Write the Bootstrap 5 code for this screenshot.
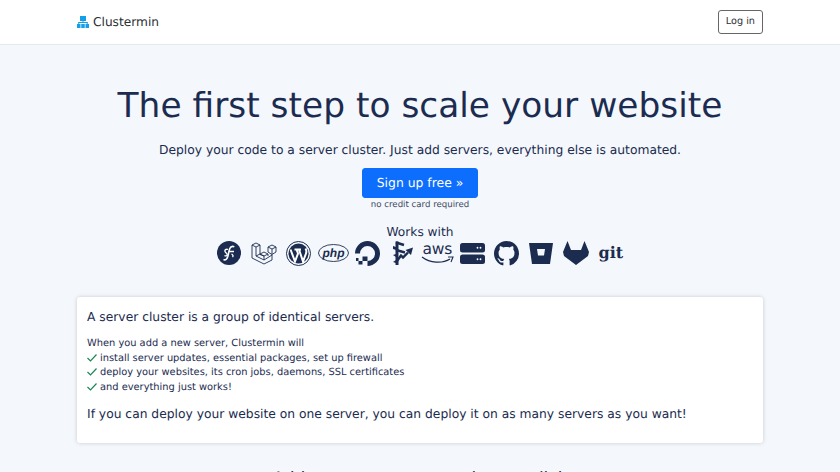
<!DOCTYPE html>
<html lang="en">
<head>
  <meta charset="UTF-8">
  <title>Clustermin</title>
  <meta name="viewport" content="width=device-width, initial-scale=1.0">
  <link href="https://cdn.jsdelivr.net/npm/bootstrap@5.3.0/dist/css/bootstrap.min.css" rel="stylesheet">
  <script src="https://cdn.jsdelivr.net/npm/bootstrap@5.3.0/dist/js/bootstrap.bundle.min.js"></script>
  <style>
    html, body { height: 472px; overflow: hidden; }
    body {
      background: #f4f8fc;
      font-family: "DejaVu Sans", sans-serif;
      color: #1c2c50;
      text-rendering: geometricPrecision;
    }
    .page-wrap { width: 686px; margin: 0 auto; }
    .top-bar { background: #fff; height: 45px; border-bottom: 1px solid #e4e7eb; }
    .brand-name { font-size: 12.2px; color: #2b2f36; }
    .login-btn {
      font-size: 9.7px; line-height: 16px; padding: 3px 7px; height: 24px;
      color: #2b2f36; border: 1px solid #666; border-radius: 3px; background: #fff;
    }
    .hero-title { font-size: 34.4px; font-weight: 400; line-height: 42px; margin: 0; padding-top: 40px; color: #1c2c50; }
    .hero-sub { font-size: 12.3px; line-height: 20px; margin: 13px 0 0; }
    .signup-btn { font-size: 12.4px; line-height: 20px; padding: 4px 14px; margin-top: 8px; border-radius: 3px; background: #0d6efd; border-color: #0d6efd; }
    .no-card { font-size: 8.6px; line-height: 14px; color: #3c4763; }
    .works-label { font-size: 12.2px; line-height: 14px; margin-top: 13px; }
    .logo-row { height: 28px; }
    .logo-slot { width: 34.7px; display: flex; justify-content: center; align-items: center; }
    .logo-slot svg { display: block; fill: #1c2c50; flex: none; }
    .aws-word { font-size: 15.5px; line-height: 14px; letter-spacing: -.2px; }
    .php-word { font: italic 700 12px "Liberation Sans", sans-serif; fill: #1c2c50; }
    .git-word { font-family: "DejaVu Serif", serif; font-weight: 700; font-size: 16px; line-height: 24px; }
    .info-box {
      background: #fff; margin-top: 30px; height: 146px; padding: 10px;
      border-radius: 3px; box-shadow: 0 0 4px rgba(0,0,0,.18);
    }
    .info-lead { font-size: 12.3px; line-height: 20px; margin: 0 0 10px; }
    .info-list { font-size: 9.86px; line-height: 14.7px; }
    .info-list svg { margin-right: 3px; vertical-align: -1px; }
    .info-end { font-size: 12.3px; line-height: 20px; margin: 8px 0 0; }
    .cut-line { font-size: 17px; line-height: 24px; margin-top: 24px; white-space: nowrap; }
  </style>
</head>
<body>

<div class="top-bar">
  <div class="page-wrap d-flex align-items-center justify-content-between h-100">
    <div class="d-flex align-items-center gap-1">
      <svg width="12" height="12" viewBox="0 0 12 12" fill="#14a0e8"><rect x="3" y="0" width="6" height="5"/><rect x="5.500" y="5" width="1" height="2"/><rect x="1.500" y="6" width="9" height="1"/><rect x="1.300" y="6" width="1" height="2"/><rect x="9.700" y="6" width="1" height="2"/><rect x="0" y="8" width="3.500" height="4"/><rect x="4.250" y="8" width="3.500" height="4"/><rect x="8.500" y="8" width="3.500" height="4"/></svg>
      <span class="brand-name">Clustermin</span>
    </div>
    <a href="#" class="btn login-btn">Log in</a>
  </div>
</div>

<div class="page-wrap text-center">
  <h1 class="hero-title">The first step to scale your website</h1>
  <p class="hero-sub">Deploy your code to a server cluster. Just add servers, everything else is automated.</p>
  <div class="d-flex justify-content-center">
    <a href="#" class="btn btn-primary signup-btn">Sign up free »</a>
  </div>
  <div class="no-card">no credit card required</div>
  <div class="works-label">Works with</div>
  <div class="logo-row d-flex justify-content-center align-items-center">
    <div class="logo-slot"><svg width="24" height="24" viewBox="0 0 24 24"><circle cx="12" cy="12" r="12"/><path d="M6.500 18.500c2 1 3.500-.5 4.300-3 .8-3 1-5.500 2-8 .8-2 2.500-2.500 4.500-1.800M11.500 10.500h5.500" fill="none" stroke="#fff" stroke-width="1.600"/><path d="M11 8.500c-2-.8-3.500.5-3 2 .5 1.500 2.500 2 2.200 3.500-.2 1-1.700 1.200-2.700.5M14.500 13c1.500.8 2 2 1 3.200" fill="none" stroke="#fff" stroke-width="1.300"/></svg></div>
    <div class="logo-slot"><svg width="26" height="24" viewBox="0 0 26 24"><path d="M1 4l4-2 4 2-4 2zM1 4v13l12 6 8-4v-5M5 6v9l8 4 8-5M9 4v9l-4 2M9 13l4-2 4 2-4 2zM9 13v.5l4 1.500v4M17 13v2M17 6l4-2 4 2-4 2zM17 6v5l4 2.500M21 8v5.500M25 6v5l-4 2.500" fill="none" stroke="#1c2c50" stroke-width=".9" stroke-linejoin="round"/></svg></div>
    <div class="logo-slot"><svg width="25" height="25" viewBox="0 0 25 25"><circle cx="12.500" cy="12.500" r="12" fill="none" stroke="#1c2c50" stroke-width="1"/><circle cx="12.500" cy="12.500" r="10"/><path d="M4.500 8.500l4.500 12 3-8-1.500-4M8.500 8.500h6.500M13 8.500l4 12 3-8c.8-2 .3-3.500-.5-5" fill="none" stroke="#fff" stroke-width="2"/></svg></div>
    <div class="logo-slot"><svg width="31" height="18" viewBox="0 0 31 18"><ellipse cx="15.500" cy="9" rx="15" ry="8.500" fill="none" stroke="#1c2c50" stroke-width=".9"/><text x="15.500" y="13" text-anchor="middle" class="php-word">php</text></svg></div>
    <div class="logo-slot"><svg width="25" height="25" viewBox="0 0 25 25"><path d="M12.500 25v-5a7.500 7.500 0 1 0-7.500-7.500H0A12.500 12.500 0 1 1 12.500 25z"/><rect x="7.500" y="15.500" width="5" height="4.500"/><rect x="3.500" y="20" width="4" height="3.500"/><rect x="1" y="17" width="2.500" height="3"/></svg></div>
    <div class="logo-slot"><svg width="22" height="26" viewBox="0 0 22 26"><path d="M5 1.500V25" fill="none" stroke="#1c2c50" stroke-width="3"/><path d="M4 2.500l8 2.500M4 10l9 2.500M5 21l4-5.500 2 2 5-5" fill="none" stroke="#1c2c50" stroke-width="2.400"/><path d="M13.500 10l7.500-2.500-2 7.500zM1 6l3 1v3L1 9zM1 15l3-1v3zM1 22l3-2v3z"/></svg></div>
    <div class="logo-slot flex-column">
      <span class="aws-word">aws</span>
      <svg width="33" height="8" viewBox="0 0 33 8"><path d="M1 1c8 6 20 7 28 2" fill="none" stroke="#1c2c50" stroke-width="1.300"/><path d="M27 1l5 0-2 5" fill="none" stroke="#1c2c50" stroke-width="1.100"/></svg>
    </div>
    <div class="logo-slot"><svg width="25" height="21" viewBox="0 0 25 21"><rect width="25" height="9.500" rx="2.500"/><rect y="11.500" width="25" height="9.500" rx="2.500"/><g fill="#fff"><circle cx="17.500" cy="4.750" r=".9"/><circle cx="20.500" cy="4.750" r=".9"/><circle cx="17.500" cy="16.250" r=".9"/><circle cx="20.500" cy="16.250" r=".9"/></g></svg></div>
    <div class="logo-slot"><svg width="25" height="25" viewBox="0 0 16 16"><path d="M8 0C3.580 0 0 3.580 0 8c0 3.540 2.290 6.530 5.470 7.590.4.070.55-.17.55-.38 0-.19-.01-.82-.01-1.490-2.010.37-2.530-.49-2.690-.94-.09-.23-.48-.94-.82-1.130-.28-.15-.68-.52-.01-.53.63-.01 1.080.58 1.230.82.720 1.210 1.870.87 2.330.66.070-.52.280-.87.510-1.070-1.780-.2-3.640-.89-3.640-3.950 0-.87.310-1.590.820-2.150-.08-.2-.36-1.020.08-2.120 0 0 .67-.21 2.200.82.640-.18 1.320-.27 2-.27s1.360.09 2 .27c1.530-1.040 2.200-.82 2.200-.82.44 1.100.16 1.920.08 2.120.51.560.82 1.270.82 2.150 0 3.070-1.870 3.750-3.650 3.950.29.250.54.730.54 1.480 0 1.070-.01 1.930-.01 2.200 0 .210.150.460.550.380A8.010 8.010 0 0 0 16 8c0-4.420-3.580-8-8-8z"/></svg></div>
    <div class="logo-slot"><svg width="24" height="21" viewBox="0 0 24 21"><path fill-rule="evenodd" d="M0 0h24l-3 21H3zM8 6l1 6.500h6L16 6z"/></svg></div>
    <div class="logo-slot"><svg width="26" height="24" viewBox="0 0 26 24"><path d="M13 24L1 15 0 11 4.500 0 8 9h10l3.500-9L26 11l-1 4z"/></svg></div>
    <div class="logo-slot"><span class="git-word">git</span></div>
  </div>

  <div class="info-box text-start">
    <p class="info-lead">A server cluster is a group of identical servers.</p>
    <div class="info-list">
      <div>When you add a new server, Clustermin will</div>
      <div><svg width="10" height="8" viewBox="0 0 10 8"><path d="M.5 4l3 3 6-6.500" fill="none" stroke="#198754" stroke-width="1.200"/></svg>install server updates, essential packages, set up firewall</div>
      <div><svg width="10" height="8" viewBox="0 0 10 8"><path d="M.5 4l3 3 6-6.500" fill="none" stroke="#198754" stroke-width="1.200"/></svg>deploy your websites, its cron jobs, daemons, SSL certificates</div>
      <div><svg width="10" height="8" viewBox="0 0 10 8"><path d="M.5 4l3 3 6-6.500" fill="none" stroke="#198754" stroke-width="1.200"/></svg>and everything just works!</div>
    </div>
    <p class="info-end">If you can deploy your website on one server, you can deploy it on as many servers as you want!</p>
  </div>

  <div class="cut-line">Add or remove servers in one click</div>
</div>

</body>
</html>
